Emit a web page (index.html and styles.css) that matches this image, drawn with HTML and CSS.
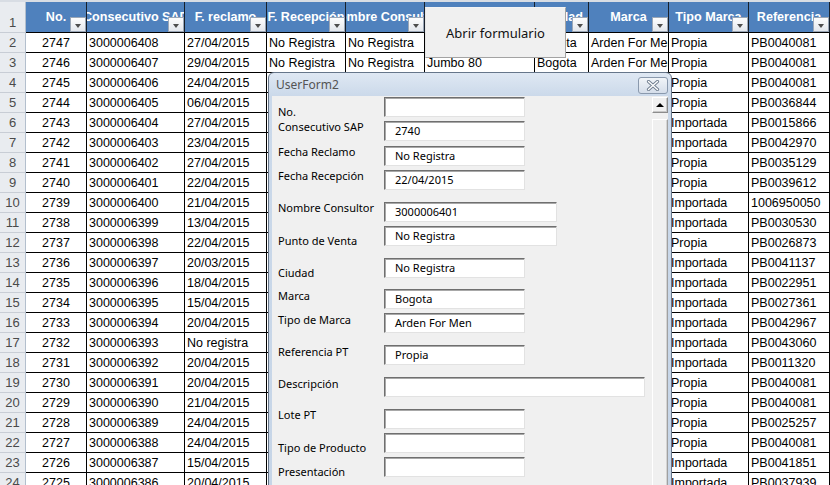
FILE: index.html
```html
<!DOCTYPE html>
<html lang="es">
<head>
<meta charset="utf-8">
<title>UserForm2</title>
<link rel="stylesheet" href="styles.css">
</head>
<body>
<div class="sheet">
  <div class="strip"></div>
  <div class="row head">
    <div class="rh">1</div>
    <div class="hc"><span>No.</span><i class="dd"></i></div>
    <div class="hc"><span>Consecutivo SAP</span><i class="dd"></i></div>
    <div class="hc"><span>F. reclamo</span><i class="dd"></i></div>
    <div class="hc"><span>F. Recepción</span><i class="dd"></i></div>
    <div class="hc"><span>Nombre Consultor</span><i class="dd"></i></div>
    <div class="hc"><span>Punto de Venta</span><i class="dd"></i></div>
    <div class="hc"><span>Ciudad</span><i class="dd"></i></div>
    <div class="hc"><span>Marca</span><i class="dd"></i></div>
    <div class="hc"><span>Tipo Marca</span><i class="dd"></i></div>
    <div class="hc"><span>Referencia</span><i class="dd"></i></div>
  </div>
  <div class="row"><div class="rh">2</div><div class="c ctr">2747</div><div class="c">3000006408</div><div class="c">27/04/2015</div><div class="c">No Registra</div><div class="c">No Registra</div><div class="c">Jumbo 80</div><div class="c">Bogota</div><div class="c">Arden For Men</div><div class="c">Propia</div><div class="c">PB0040081</div></div>
  <div class="row"><div class="rh">3</div><div class="c ctr">2746</div><div class="c">3000006407</div><div class="c">29/04/2015</div><div class="c">No Registra</div><div class="c">No Registra</div><div class="c">Jumbo 80</div><div class="c">Bogota</div><div class="c">Arden For Men</div><div class="c">Propia</div><div class="c">PB0040081</div></div>
  <div class="row"><div class="rh">4</div><div class="c ctr">2745</div><div class="c">3000006406</div><div class="c">24/04/2015</div><div class="c">No Registra</div><div class="c">No Registra</div><div class="c">Jumbo 80</div><div class="c">Bogota</div><div class="c">Arden For Men</div><div class="c">Propia</div><div class="c">PB0040081</div></div>
  <div class="row"><div class="rh">5</div><div class="c ctr">2744</div><div class="c">3000006405</div><div class="c">06/04/2015</div><div class="c">No Registra</div><div class="c">No Registra</div><div class="c">Jumbo 80</div><div class="c">Bogota</div><div class="c">Arden For Men</div><div class="c">Propia</div><div class="c">PB0036844</div></div>
  <div class="row"><div class="rh">6</div><div class="c ctr">2743</div><div class="c">3000006404</div><div class="c">27/04/2015</div><div class="c">No Registra</div><div class="c">No Registra</div><div class="c">Jumbo 80</div><div class="c">Bogota</div><div class="c">Lancome</div><div class="c">Importada</div><div class="c">PB0015866</div></div>
  <div class="row"><div class="rh">7</div><div class="c ctr">2742</div><div class="c">3000006403</div><div class="c">23/04/2015</div><div class="c">No Registra</div><div class="c">No Registra</div><div class="c">Jumbo 80</div><div class="c">Bogota</div><div class="c">Lancome</div><div class="c">Importada</div><div class="c">PB0042970</div></div>
  <div class="row"><div class="rh">8</div><div class="c ctr">2741</div><div class="c">3000006402</div><div class="c">27/04/2015</div><div class="c">No Registra</div><div class="c">No Registra</div><div class="c">Jumbo 80</div><div class="c">Bogota</div><div class="c">Arden For Men</div><div class="c">Propia</div><div class="c">PB0035129</div></div>
  <div class="row"><div class="rh">9</div><div class="c ctr">2740</div><div class="c">3000006401</div><div class="c">22/04/2015</div><div class="c">No Registra</div><div class="c">No Registra</div><div class="c">Jumbo 80</div><div class="c">Bogota</div><div class="c">Arden For Men</div><div class="c">Propia</div><div class="c">PB0039612</div></div>
  <div class="row"><div class="rh">10</div><div class="c ctr">2739</div><div class="c">3000006400</div><div class="c">21/04/2015</div><div class="c">No Registra</div><div class="c">No Registra</div><div class="c">Jumbo 80</div><div class="c">Bogota</div><div class="c">Lancome</div><div class="c">Importada</div><div class="c">1006950050</div></div>
  <div class="row"><div class="rh">11</div><div class="c ctr">2738</div><div class="c">3000006399</div><div class="c">13/04/2015</div><div class="c">No Registra</div><div class="c">No Registra</div><div class="c">Jumbo 80</div><div class="c">Bogota</div><div class="c">Lancome</div><div class="c">Importada</div><div class="c">PB0030530</div></div>
  <div class="row"><div class="rh">12</div><div class="c ctr">2737</div><div class="c">3000006398</div><div class="c">22/04/2015</div><div class="c">No Registra</div><div class="c">No Registra</div><div class="c">Jumbo 80</div><div class="c">Bogota</div><div class="c">Arden For Men</div><div class="c">Propia</div><div class="c">PB0026873</div></div>
  <div class="row"><div class="rh">13</div><div class="c ctr">2736</div><div class="c">3000006397</div><div class="c">20/03/2015</div><div class="c">No Registra</div><div class="c">No Registra</div><div class="c">Jumbo 80</div><div class="c">Bogota</div><div class="c">Lancome</div><div class="c">Importada</div><div class="c">PB0041137</div></div>
  <div class="row"><div class="rh">14</div><div class="c ctr">2735</div><div class="c">3000006396</div><div class="c">18/04/2015</div><div class="c">No Registra</div><div class="c">No Registra</div><div class="c">Jumbo 80</div><div class="c">Bogota</div><div class="c">Lancome</div><div class="c">Importada</div><div class="c">PB0022951</div></div>
  <div class="row"><div class="rh">15</div><div class="c ctr">2734</div><div class="c">3000006395</div><div class="c">15/04/2015</div><div class="c">No Registra</div><div class="c">No Registra</div><div class="c">Jumbo 80</div><div class="c">Bogota</div><div class="c">Lancome</div><div class="c">Importada</div><div class="c">PB0027361</div></div>
  <div class="row"><div class="rh">16</div><div class="c ctr">2733</div><div class="c">3000006394</div><div class="c">20/04/2015</div><div class="c">No Registra</div><div class="c">No Registra</div><div class="c">Jumbo 80</div><div class="c">Bogota</div><div class="c">Lancome</div><div class="c">Importada</div><div class="c">PB0042967</div></div>
  <div class="row"><div class="rh">17</div><div class="c ctr">2732</div><div class="c">3000006393</div><div class="c">No registra</div><div class="c">No Registra</div><div class="c">No Registra</div><div class="c">Jumbo 80</div><div class="c">Bogota</div><div class="c">Lancome</div><div class="c">Importada</div><div class="c">PB0043060</div></div>
  <div class="row"><div class="rh">18</div><div class="c ctr">2731</div><div class="c">3000006392</div><div class="c">20/04/2015</div><div class="c">No Registra</div><div class="c">No Registra</div><div class="c">Jumbo 80</div><div class="c">Bogota</div><div class="c">Lancome</div><div class="c">Importada</div><div class="c">PB0011320</div></div>
  <div class="row"><div class="rh">19</div><div class="c ctr">2730</div><div class="c">3000006391</div><div class="c">20/04/2015</div><div class="c">No Registra</div><div class="c">No Registra</div><div class="c">Jumbo 80</div><div class="c">Bogota</div><div class="c">Arden For Men</div><div class="c">Propia</div><div class="c">PB0040081</div></div>
  <div class="row"><div class="rh">20</div><div class="c ctr">2729</div><div class="c">3000006390</div><div class="c">21/04/2015</div><div class="c">No Registra</div><div class="c">No Registra</div><div class="c">Jumbo 80</div><div class="c">Bogota</div><div class="c">Arden For Men</div><div class="c">Propia</div><div class="c">PB0040081</div></div>
  <div class="row"><div class="rh">21</div><div class="c ctr">2728</div><div class="c">3000006389</div><div class="c">24/04/2015</div><div class="c">No Registra</div><div class="c">No Registra</div><div class="c">Jumbo 80</div><div class="c">Bogota</div><div class="c">Arden For Men</div><div class="c">Propia</div><div class="c">PB0025257</div></div>
  <div class="row"><div class="rh">22</div><div class="c ctr">2727</div><div class="c">3000006388</div><div class="c">24/04/2015</div><div class="c">No Registra</div><div class="c">No Registra</div><div class="c">Jumbo 80</div><div class="c">Bogota</div><div class="c">Arden For Men</div><div class="c">Propia</div><div class="c">PB0040081</div></div>
  <div class="row"><div class="rh">23</div><div class="c ctr">2726</div><div class="c">3000006387</div><div class="c">15/04/2015</div><div class="c">No Registra</div><div class="c">No Registra</div><div class="c">Jumbo 80</div><div class="c">Bogota</div><div class="c">Lancome</div><div class="c">Importada</div><div class="c">PB0041851</div></div>
  <div class="row"><div class="rh">24</div><div class="c ctr">2725</div><div class="c">3000006386</div><div class="c">20/04/2015</div><div class="c">No Registra</div><div class="c">No Registra</div><div class="c">Jumbo 80</div><div class="c">Bogota</div><div class="c">Lancome</div><div class="c">Importada</div><div class="c">PB0037939</div></div>
</div>

<button class="open-btn" type="button">Abrir formulario</button>

<div class="userform">
  <div class="titlebar">
    <span class="title">UserForm2</span>
    <span class="close">
      <svg width="14" height="11" viewBox="0 0 14 11">
        <path d="M2.5 1.5 L11.5 9.5 M11.5 1.5 L2.5 9.5" stroke="#6f7d8f" stroke-width="3.2" stroke-linecap="round" fill="none"/>
        <path d="M2.5 1.5 L11.5 9.5 M11.5 1.5 L2.5 9.5" stroke="#ffffff" stroke-width="1.4" stroke-linecap="round" fill="none"/>
      </svg>
    </span>
  </div>
  <div class="client">
    <div class="fields">
      <div class="field"><span class="lbl low">No.</span><span class="tb w1"></span></div>
      <div class="field g4"><span class="lbl">Consecutivo SAP</span><span class="tb w1">2740</span></div>
      <div class="field g5"><span class="lbl">Fecha Reclamo</span><span class="tb w1">No Registra</span></div>
      <div class="field g4"><span class="lbl">Fecha Recepción</span><span class="tb w1">22/04/2015</span></div>
      <div class="field g12"><span class="lbl">Nombre Consultor</span><span class="tb w2">3000006401</span></div>
      <div class="field g4"><span class="lbl low">Punto de Venta</span><span class="tb w2">No Registra</span></div>
      <div class="field g12"><span class="lbl low">Ciudad</span><span class="tb w1">No Registra</span></div>
      <div class="field g11"><span class="lbl mid">Marca</span><span class="tb w1">Bogota</span></div>
      <div class="field g4"><span class="lbl mid">Tipo de Marca</span><span class="tb w1">Arden For Men</span></div>
      <div class="field g12"><span class="lbl mid">Referencia PT</span><span class="tb w1">Propia</span></div>
      <div class="field g12"><span class="lbl mid">Descripción</span><span class="tb w3"></span></div>
      <div class="field g12"><span class="lbl">Lote PT</span><span class="tb w1"></span></div>
      <div class="field g4"><span class="lbl low">Tipo de Producto</span><span class="tb w1"></span></div>
      <div class="field g4"><span class="lbl low">Presentación</span><span class="tb w1"></span></div>
    </div>
    <div class="vscroll">
      <div class="sb-up"><i></i></div>
      <div class="sb-thumb"></div>
    </div>
  </div>
</div>
</body>
</html>
```

FILE: styles.css
```css
* { box-sizing: border-box; }
html, body { margin: 0; padding: 0; }
body {
  width: 830px;
  height: 485px;
  overflow: hidden;
  position: relative;
  background: #ffffff;
  font-family: "Liberation Sans", Arial, sans-serif;
}

/* ---------- spreadsheet ---------- */
.sheet { width: 830px; }
.strip { height: 2px; background: #d8dde4; }
.row {
  display: grid;
  grid-template-columns: 26px 61px 98px 82px 79px 79px 110px 54px 80px 80px 81px;
  height: 20px;
}
.row.head { height: 31px; }

.rh {
  background: #e9ecf0;
  border-right: 1px solid #b3bfcd;
  border-bottom: 1px solid #c8cdd5;
  color: #4a4a4a;
  font-size: 13px;
  line-height: 19px;
  text-align: center;
}
.head .rh {
  display: flex;
  align-items: flex-end;
  justify-content: center;
  padding-bottom: 2px;
  line-height: 15px;
}

.c {
  border-right: 1px solid #000;
  border-bottom: 1px solid #000;
  font-size: 12.5px;
  line-height: 20px;
  padding-left: 2px;
  white-space: nowrap;
  overflow: hidden;
  color: #000;
}
.c.ctr { text-align: center; padding-left: 0; }

.hc {
  position: relative;
  background: #4f81bd;
  border-right: 1px solid #17202c;
  border-bottom: 1px solid #000;
  color: #ffffff;
  font-weight: bold;
  font-size: 12.6px;
  display: flex;
  align-items: center;
  justify-content: center;
  overflow: hidden;
  white-space: nowrap;
}
.hc span { flex: none; }
.dd {
  position: absolute;
  right: 0;
  bottom: 0;
  width: 16px;
  height: 15px;
  background: linear-gradient(#fdfdfd, #e3e7ed);
  border: 1px solid #9ba7b7;
}
.dd::after {
  content: "";
  position: absolute;
  left: 4px;
  top: 6px;
  border-left: 3.5px solid transparent;
  border-right: 3.5px solid transparent;
  border-top: 4px solid #4d4d4d;
}

/* ---------- command button ---------- */
.open-btn {
  position: absolute;
  left: 425px;
  top: 7px;
  width: 141px;
  height: 51px;
  margin: 0;
  padding: 0;
  background: #f0f0f0;
  border: 1px solid;
  border-color: #f4f4f4 #a3a3a3 #a3a3a3 #e6e6e6;
  font-family: "Noto Sans", "Open Sans", sans-serif;
  font-size: 13px;
  color: #111;
}

/* ---------- user form window ---------- */
.userform {
  position: absolute;
  left: 268px;
  top: 72px;
  width: 404px;
  height: 430px;
  border: 1px solid #66768a;
  border-radius: 6px 6px 0 0;
  background: linear-gradient(#dfe8f3, #cbd9ea 23px, #c6d5e7);
  padding: 0 3px;
  display: flex;
  flex-direction: column;
  font-family: "Noto Sans", "Open Sans", sans-serif;
}
.titlebar {
  flex: none;
  height: 23px;
  display: flex;
  align-items: center;
  justify-content: space-between;
  padding-left: 4px;
}
.title { font-size: 12px; color: #545454; }
.close {
  width: 30px;
  height: 17px;
  margin-top: 1px;
  border: 1px solid #8a99ad;
  border-radius: 3px;
  background: linear-gradient(#f1f4f8, #d5deea);
  display: flex;
  align-items: center;
  justify-content: center;
}
.close svg { display: block; }

.client {
  flex: 1;
  background: #f0f0f0;
  display: flex;
}
.fields {
  flex: 1;
  padding: 1px 0 0 6px;
}
.field {
  display: grid;
  grid-template-columns: 106px auto;
  height: 20px;
  align-items: start;
}
.field.g4 { margin-top: 4px; }
.field.g5 { margin-top: 5px; }
.field.g11 { margin-top: 11px; }
.field.g12 { margin-top: 12px; }

.lbl {
  font-size: 11px;
  line-height: 14px;
  color: #000;
  white-space: nowrap;
  margin-top: -1px;
}
.lbl.mid { margin-top: 0; }
.lbl.low { margin-top: 8px; }

.tb {
  height: 20px;
  background: #ffffff;
  border: 1px solid;
  border-color: #6f6f6f #e2e2e2 #e2e2e2 #6f6f6f;
  box-shadow: inset 1px 1px 0 #a8a8a8;
  font-size: 11px;
  line-height: 18px;
  padding-left: 10px;
  color: #000;
  white-space: nowrap;
}
.tb.w1 { width: 141px; }
.tb.w2 { width: 173px; }
.tb.w3 { width: 261px; }

/* vertical scroll bar */
.vscroll {
  flex: none;
  width: 16px;
  padding-top: 1px;
  display: flex;
  flex-direction: column;
}
.sb-up {
  height: 16px;
  background: #f0f0f0;
  border: 1px solid;
  border-color: #ffffff #8c8c8c #8c8c8c #ffffff;
  box-shadow: inset -1px -1px 0 #c8c8c8;
  display: flex;
  align-items: center;
  justify-content: center;
}
.sb-up i {
  display: block;
  border-left: 4px solid transparent;
  border-right: 4px solid transparent;
  border-bottom: 4px solid #000;
}
.sb-thumb {
  flex: 1;
  margin-top: 6px;
  background: #f0f0f0;
  border: 1px solid;
  border-color: #ffffff #a0a0a0 #a0a0a0 #ffffff;
  box-shadow: inset -1px 0 0 #d4d4d4;
}
```
